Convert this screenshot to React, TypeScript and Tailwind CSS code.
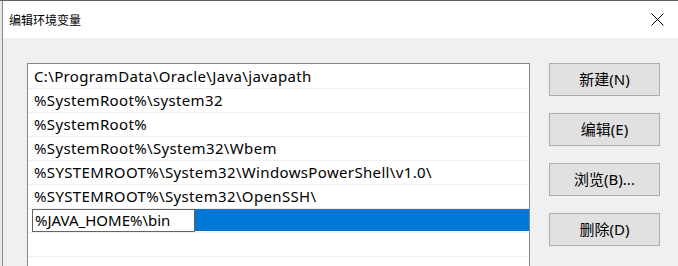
import React from 'react';

const paths = [
  'C:\\ProgramData\\Oracle\\Java\\javapath',
  '%SystemRoot%\\system32',
  '%SystemRoot%',
  '%SystemRoot%\\System32\\Wbem',
  '%SYSTEMROOT%\\System32\\WindowsPowerShell\\v1.0\\',
  '%SYSTEMROOT%\\System32\\OpenSSH\\',
];

const buttons = ['新建(N)', '编辑(E)', '浏览(B)...', '删除(D)'];

const font = "font-['Segoe_UI','Noto_Sans','Noto_Sans_CJK_SC',sans-serif]";

export default function App() {
  return (
    <div className={`w-[678px] h-[266px] overflow-hidden flex border-t border-[#5f5f5f] bg-[#f0f0f0] text-black ${font}`}>
      {/* sliver of the window behind */}
      <div className="w-[2px] shrink-0 bg-[#e8e8e8]" />
      <div className="flex-1 flex flex-col border-l border-[#8a8a8a]">
        {/* title bar */}
        <div className="h-[37px] shrink-0 bg-white flex items-center justify-between pl-[6px] pr-[14px]">
          <span className="text-[12px] leading-none font-['Noto_Sans_CJK_SC',sans-serif]">编辑环境变量</span>
          <svg width="13" height="13" viewBox="0 0 13 13" className="text-black">
            <path d="M0.5 0.5 L12.5 12.5 M12.5 0.5 L0.5 12.5" stroke="currentColor" strokeWidth="1" fill="none" />
          </svg>
        </div>

        <div className="flex-1 flex pl-[24px] pt-[25px]">
          {/* list */}
          <div className="w-[503px] shrink-0 h-[260px] bg-white border border-[#828790] pt-px">
            {paths.map((p) => (
              <div
                key={p}
                className="h-[24px] border-b border-[#f0f0f0] pl-[6px] flex items-center text-[15px] tracking-[0.35px] leading-none whitespace-nowrap"
              >
                {p}
              </div>
            ))}
            <div className="h-[24px] border-b border-[#f0f0f0] flex">
              <div className="w-[4px] bg-white" />
              <div className="w-[163px] border border-[#646464] bg-white pl-[2px] flex items-center text-[15px] leading-none whitespace-nowrap">
                %JAVA_HOME%\bin
              </div>
              <div className="flex-1 bg-[#0078d7] mb-px" />
            </div>
            <div className="h-[24px] border-b border-[#f0f0f0]" />
          </div>

          {/* buttons */}
          <div className="ml-[19px] flex flex-col gap-[17px]">
            {buttons.map((b) => (
              <div
                key={b}
                className="w-[111px] h-[33px] bg-[#e1e1e1] border border-[#adadad] flex items-center justify-center text-[15px] leading-none"
              >
                {b}
              </div>
            ))}
          </div>
        </div>
      </div>
    </div>
  );
}
